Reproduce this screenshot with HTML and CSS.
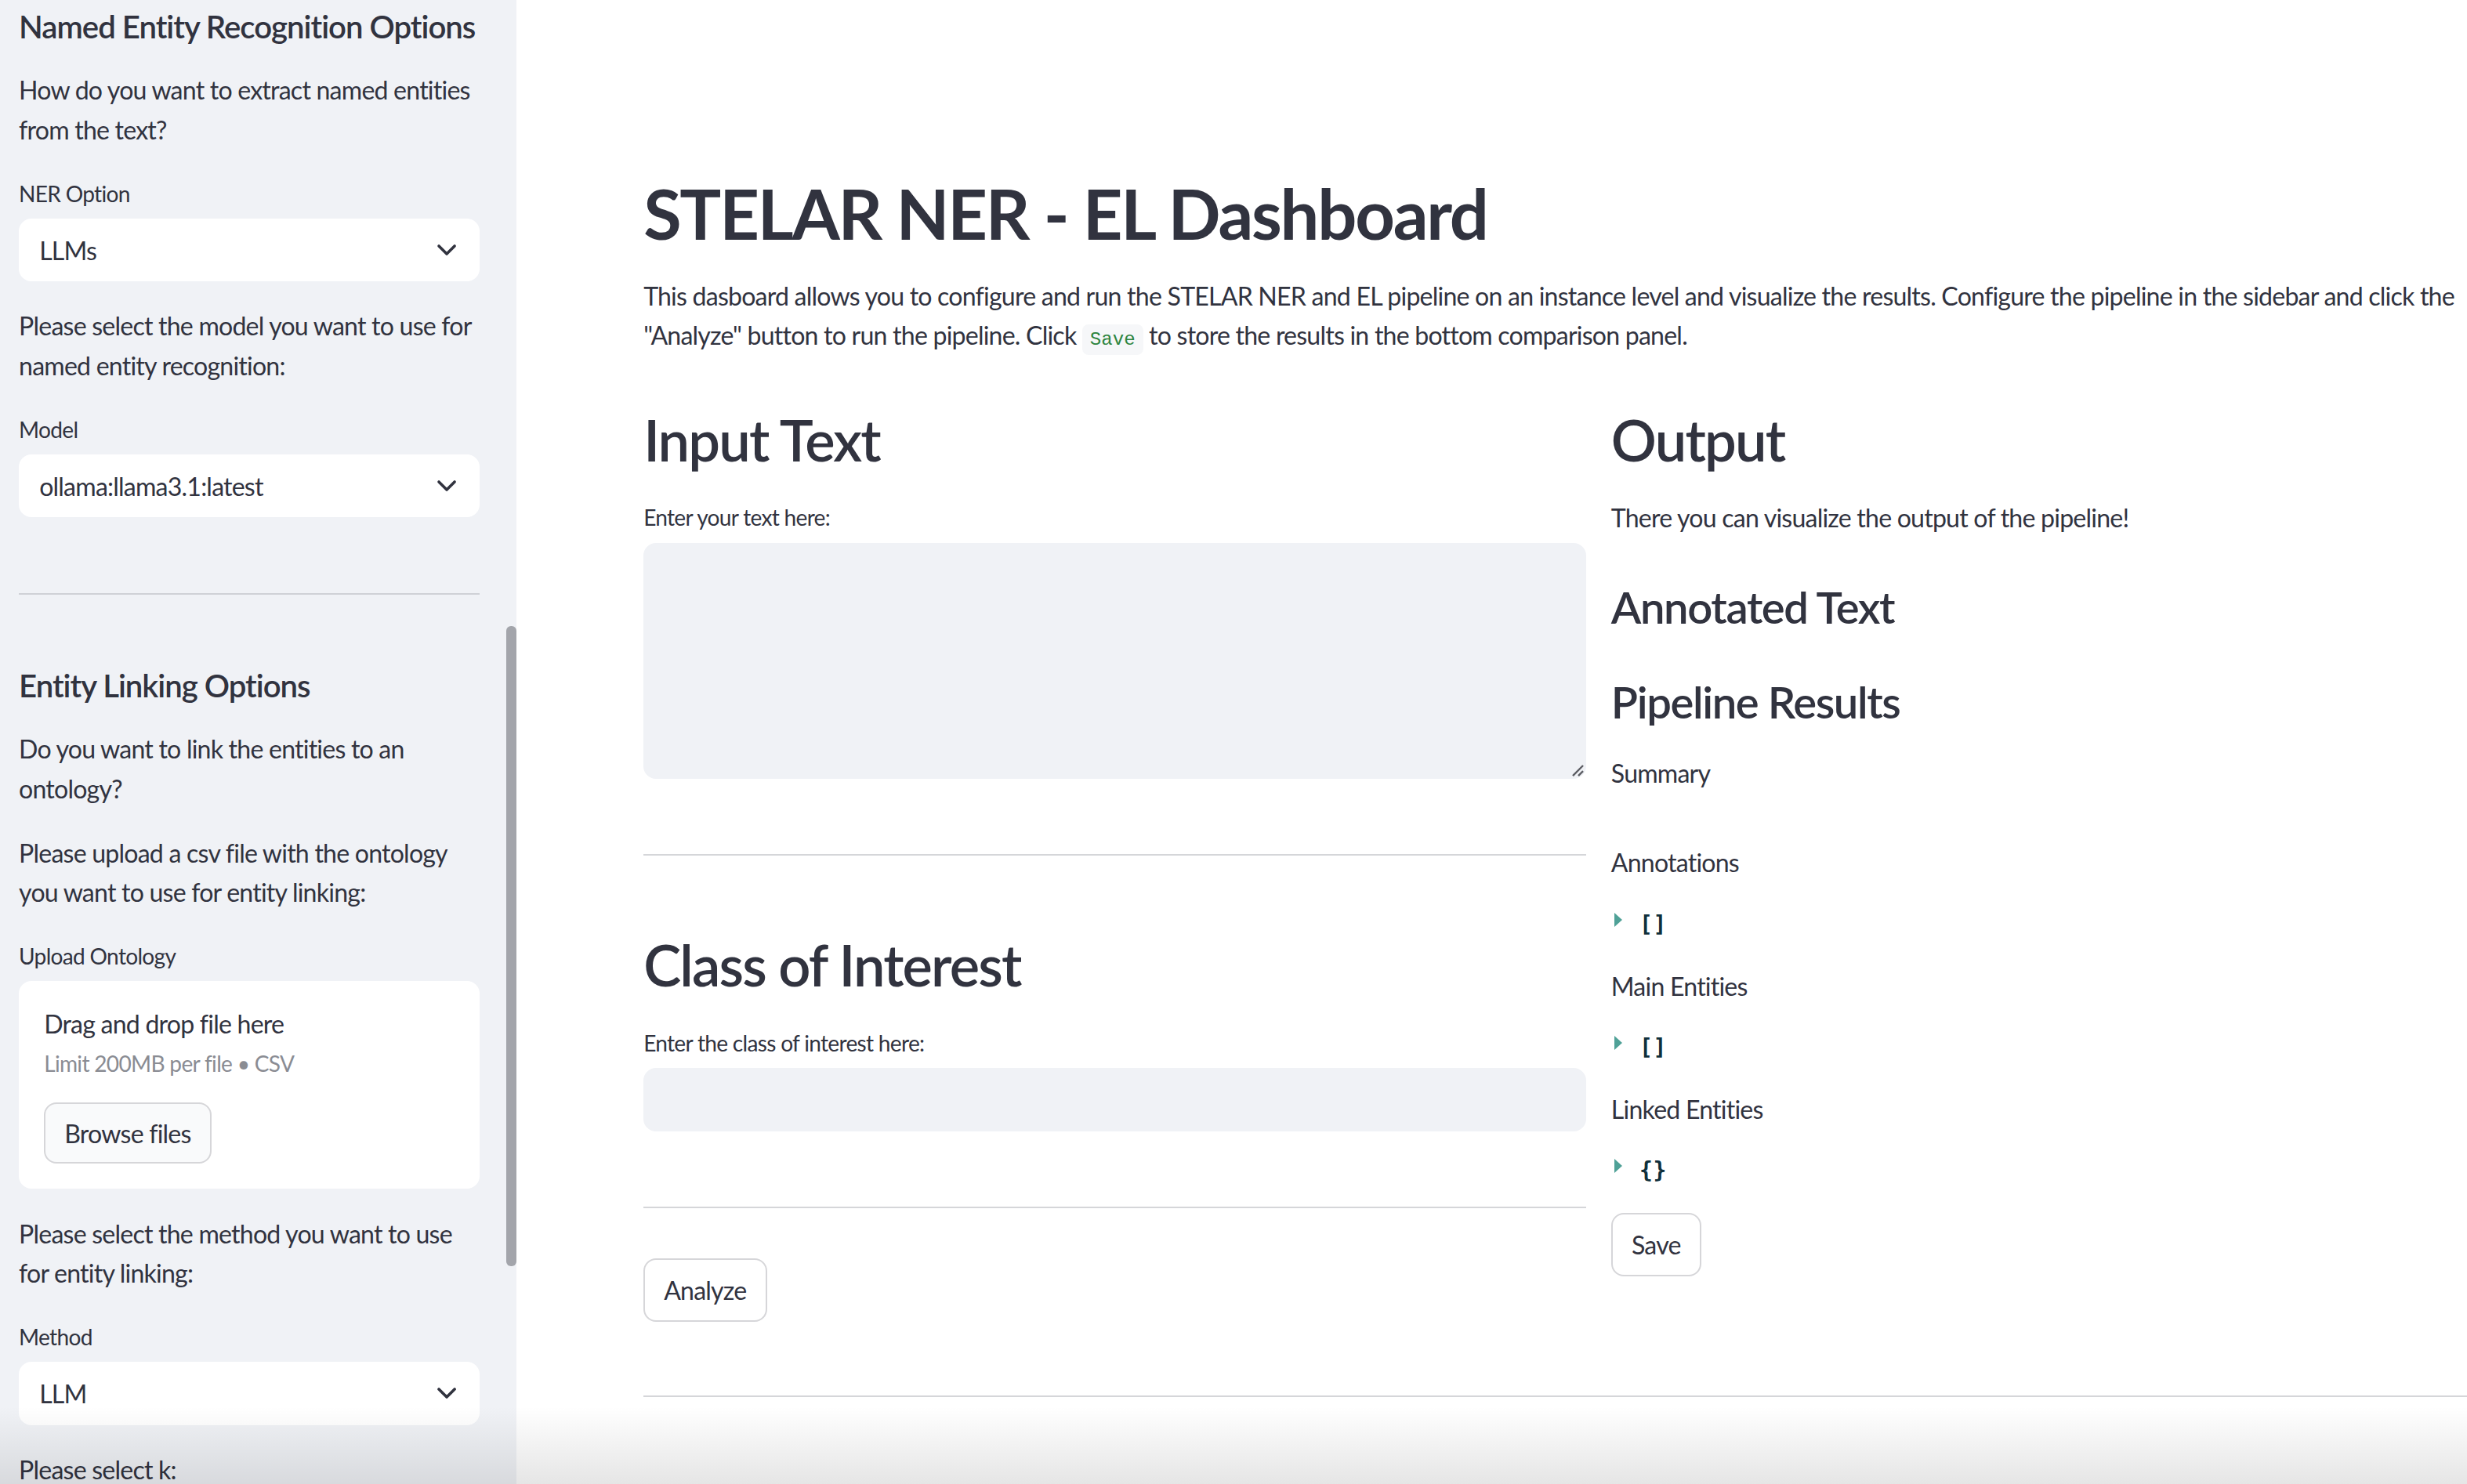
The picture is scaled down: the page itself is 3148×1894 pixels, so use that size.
FILE: index.html
```html
<!DOCTYPE html>
<html lang="en">
<head>
<meta charset="utf-8">
<title>STELAR NER - EL Dashboard</title>
<link rel="stylesheet" href="styles.css">
</head>
<body>
<div class="app">
  <aside class="sidebar">
    <div class="sidebar-content">
      <h3 class="side-heading side-heading-first">Named Entity Recognition Options</h3>
      <p class="text">How do you want to extract named entities from the text?</p>
      <div class="field">
        <div class="label">NER Option</div>
        <div class="select"><span>LLMs</span><svg class="chev" viewBox="0 0 16 16"><path d="M3 5.5 L8 10.5 L13 5.5"/></svg></div>
      </div>
      <p class="text">Please select the model you want to use for named entity recognition:</p>
      <div class="field">
        <div class="label">Model</div>
        <div class="select"><span>ollama:llama3.1:latest</span><svg class="chev" viewBox="0 0 16 16"><path d="M3 5.5 L8 10.5 L13 5.5"/></svg></div>
      </div>
      <hr class="rule side-rule">
      <h3 class="side-heading">Entity Linking Options</h3>
      <p class="text">Do you want to link the entities to an ontology?</p>
      <p class="text">Please upload a csv file with the ontology you want to use for entity linking:</p>
      <div class="field">
        <div class="label">Upload Ontology</div>
        <div class="dropzone">
          <div class="drop-title">Drag and drop file here</div>
          <div class="drop-sub">Limit 200MB per file • CSV</div>
          <button class="btn btn-browse">Browse files</button>
        </div>
      </div>
      <p class="text">Please select the method you want to use for entity linking:</p>
      <div class="field">
        <div class="label">Method</div>
        <div class="select"><span>LLM</span><svg class="chev" viewBox="0 0 16 16"><path d="M3 5.5 L8 10.5 L13 5.5"/></svg></div>
      </div>
      <p class="text">Please select k:</p>
    </div>
    <div class="scroll-thumb"></div>
  </aside>

  <main class="main">
    <div class="block">
      <h1 class="title">STELAR NER - EL Dashboard</h1>
      <p class="text intro">This dasboard allows you to configure and run the STELAR NER and EL pipeline on an instance level and visualize the results. Configure the pipeline in the sidebar and click the "Analyze" button to run the pipeline. Click <code class="code">Save</code> to store the results in the bottom comparison panel.</p>

      <div class="columns">
        <section class="col">
          <h2 class="h2">Input Text</h2>
          <div class="field">
            <div class="label">Enter your text here:</div>
            <div class="textarea-wrap">
              <textarea class="textarea"></textarea>
              <svg class="grip" viewBox="0 0 8 8"><path d="M1 7.5 L7.5 1 M4.5 7.5 L7.5 4.5"/></svg>
            </div>
          </div>
          <hr class="rule">
          <h2 class="h2">Class of Interest</h2>
          <div class="field">
            <div class="label">Enter the class of interest here:</div>
            <input class="input" type="text">
          </div>
          <hr class="rule">
          <div class="btn-row"><button class="btn">Analyze</button></div>
        </section>

        <section class="col">
          <h2 class="h2">Output</h2>
          <p class="text">There you can visualize the output of the pipeline!</p>
          <h3 class="h3">Annotated Text</h3>
          <h3 class="h3">Pipeline Results</h3>
          <p class="text">Summary</p>
          <div class="spacer"></div>
          <p class="text">Annotations</p>
          <div class="json"><span class="caret"></span><span class="brackets">[]</span></div>
          <p class="text">Main Entities</p>
          <div class="json"><span class="caret"></span><span class="brackets">[]</span></div>
          <p class="text">Linked Entities</p>
          <div class="json"><span class="caret"></span><span class="brackets">{}</span></div>
          <div class="btn-row"><button class="btn">Save</button></div>
        </section>
      </div>
      <hr class="rule rule-bottom">
    </div>
  </main>
  <div class="bottom-fade"></div>
</div>
</body>
</html>
```

FILE: styles.css
```css
html, body {
  margin: 0;
  padding: 0;
  background: #ffffff;
  overflow: hidden;
}

.app {
  zoom: 2.0077;
  width: 1568px;
  height: 944px;
  display: flex;
  position: relative;
  overflow: hidden;
  font-family: "Lato", "Source Sans Pro", "Noto Sans", sans-serif;
  color: #31333f;
}

.app,
.app * {
  letter-spacing: -0.025em;
}

/* ---------- sidebar ---------- */
.sidebar {
  width: 328px;
  flex: none;
  height: 100%;
  background: #f0f2f6;
  position: relative;
  overflow: hidden;
}

.sidebar-content {
  padding: 5px 23px 0 12px;
  display: flex;
  flex-direction: column;
  gap: 16px;
}

.side-heading {
  margin: 0;
  padding-top: 14px;
  font-size: 20px;
  line-height: 24px;
  font-weight: 600;
  white-space: nowrap;
}

.side-heading-first {
  padding-top: 0;
}

.text {
  margin: 0;
  font-size: 16px;
  line-height: 25px;
}

.field {
  display: flex;
  flex-direction: column;
}

.label {
  height: 24px;
  display: flex;
  align-items: center;
  margin-bottom: 4px;
  font-size: 14px;
}

.select {
  height: 40px;
  box-sizing: border-box;
  background: #ffffff;
  border-radius: 8px;
  display: flex;
  align-items: center;
  justify-content: space-between;
  padding: 0 13px;
  font-size: 16px;
}

.chev {
  width: 16px;
  height: 16px;
  fill: none;
  stroke: #31333f;
  stroke-width: 1.8;
  stroke-linecap: round;
  stroke-linejoin: round;
}

.dropzone {
  background: #ffffff;
  border-radius: 8px;
  padding: 16px;
  display: flex;
  flex-direction: column;
  align-items: flex-start;
}

.drop-title {
  font-size: 16px;
  line-height: 22px;
}

.drop-sub {
  margin-top: 4px;
  font-size: 14px;
  line-height: 20px;
  color: #8a8c93;
}

.btn {
  display: block;
  font-family: inherit;
  font-size: 16px;
  color: #31333f;
  height: 40px;
  padding: 0 12px;
  background: #ffffff;
  border: 1px solid #d6d6d9;
  border-radius: 8px;
}

.btn-row {
  display: flex;
}

.btn-browse {
  margin-top: 15px;
  height: 39px;
  background: #f9fafb;
}

.scroll-thumb {
  position: absolute;
  left: 322px;
  top: 398px;
  width: 6px;
  height: 407px;
  border-radius: 3px;
  background: #a3a5ab;
}

/* ---------- main ---------- */
.main {
  flex: 1;
  min-width: 0;
  overflow: hidden;
  padding: 109px 0 0 81px;
}

.block {
  width: 1214px;
}

.title {
  margin: 0 0 14px;
  font-size: 44px;
  line-height: 52.8px;
  font-weight: 700;
}

.intro {
  max-width: 1190px;
  margin-bottom: 16px;
}

.columns {
  display: grid;
  grid-template-columns: 599px 599px;
  column-gap: 16px;
  align-items: start;
}

.col {
  display: flex;
  flex-direction: column;
  gap: 16px;
}

.h2 {
  margin: 0;
  padding-top: 16px;
  font-size: 36px;
  line-height: 43.2px;
  font-weight: 600;
}

.h3 {
  margin: 0;
  padding-top: 11px;
  font-size: 28px;
  line-height: 33.6px;
  font-weight: 600;
}

.textarea-wrap {
  position: relative;
}

.textarea {
  display: block;
  box-sizing: border-box;
  height: 150px;
  width: 100%;
  background: #f0f2f6;
  border: 1px solid #f0f2f6;
  border-radius: 8px;
  resize: none;
  font-family: inherit;
  font-size: 16px;
  outline: none;
}

.grip {
  position: absolute;
  right: 1.5px;
  bottom: 1.5px;
  width: 8px;
  height: 8px;
  fill: none;
  stroke: #5d5e64;
  stroke-width: 1.2;
}

.input {
  display: block;
  box-sizing: border-box;
  height: 40px;
  width: 100%;
  background: #f0f2f6;
  border: 1px solid #f0f2f6;
  border-radius: 8px;
  font-family: inherit;
  font-size: 16px;
  outline: none;
}

.rule {
  margin: 32px 0 16px;
  border: none;
  height: 1px;
  background: #d5d6d9;
}

.side-rule {
  background: #cfd1d6;
}

.rule-bottom {
  margin-top: 47px;
  width: 1300px;
}

.spacer {
  height: 0;
}

.json {
  height: 21.4px;
  display: flex;
  align-items: flex-start;
}

.caret {
  width: 0;
  height: 0;
  margin: 3px 0 0 2px;
  border-left: 5px solid #4fa197;
  border-top: 4.6px solid transparent;
  border-bottom: 4.6px solid transparent;
}

.app .brackets {
  margin-left: 11px;
  font-family: "DejaVu Sans Mono", "Liberation Mono", monospace;
  font-weight: 700;
  font-size: 14px;
  line-height: 21.4px;
  color: #0f2f3b;
  letter-spacing: 0.3px;
}

.app .code {
  font-family: "Liberation Mono", "DejaVu Sans Mono", monospace;
  font-size: 12px;
  line-height: 1;
  color: #2e8540;
  background: #f6f7f9;
  border-radius: 4px;
  padding: 3px 5px;
  letter-spacing: 0;
}

.bottom-fade {
  position: absolute;
  left: 0;
  right: 0;
  bottom: 0;
  height: 50px;
  background: linear-gradient(to bottom, rgba(0, 0, 0, 0), rgba(0, 0, 0, 0.1));
  pointer-events: none;
}
```
